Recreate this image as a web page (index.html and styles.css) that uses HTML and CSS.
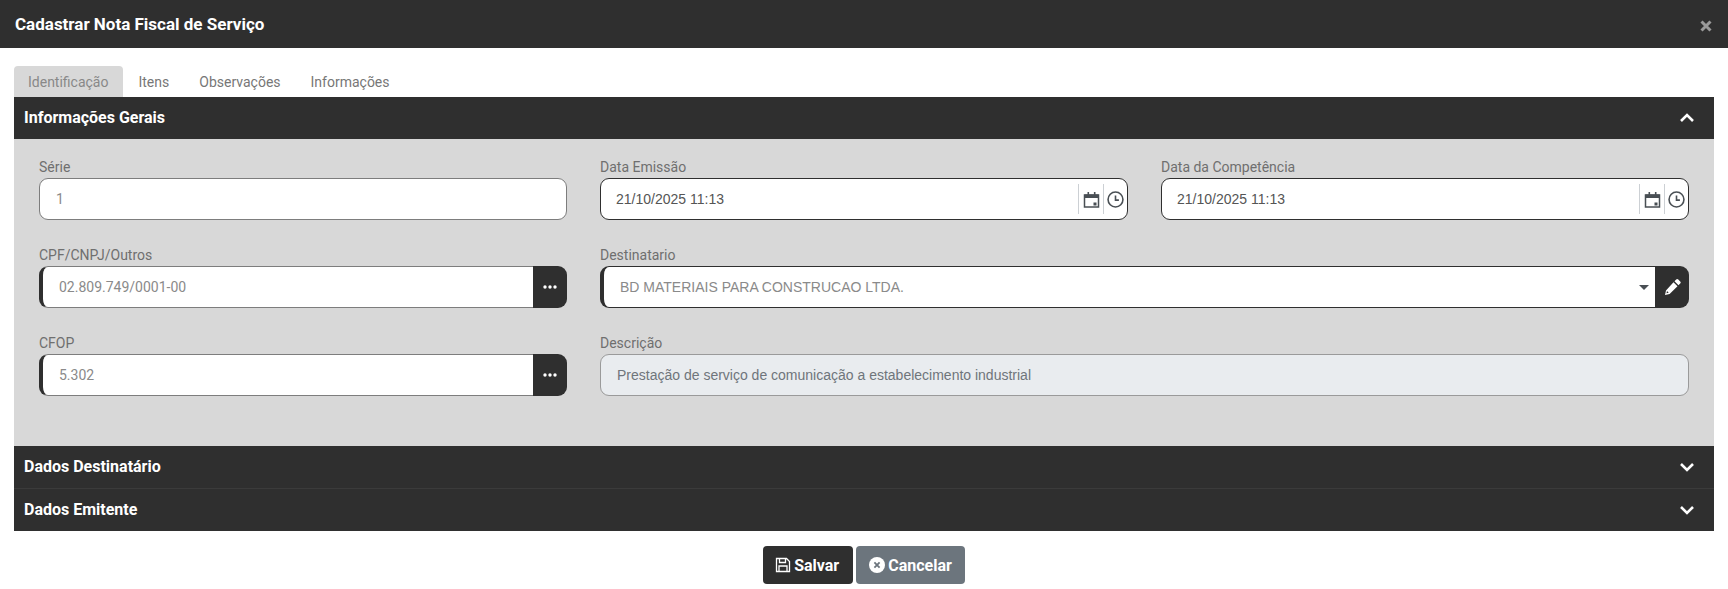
FILE: index.html
```html
<!DOCTYPE html>
<html lang="pt-BR">
<head>
	<meta charset="UTF-8">
	<title>Cadastrar Nota Fiscal de Serviço</title>
	<link rel="stylesheet" href="styles.css">
</head>
<body>
	<div class="modal-head">
		<h1>Cadastrar Nota Fiscal de Serviço</h1>
		<svg class="close" viewBox="0 0 12 12"><path d="M1.500 1.500l9 9M10.500 1.500l-9 9"/></svg>
	</div>
	<div class="content">
		<ul class="tabs">
			<li class="active">Identificação</li>
			<li>Itens</li>
			<li>Observações</li>
			<li>Informações</li>
		</ul>
		<div class="bar">
			<span>Informações Gerais</span>
			<svg class="chev" viewBox="0 0 16 10"><path d="M2 8l6-6 6 6"/></svg>
		</div>
		<div class="panel">
			<div class="field">
				<label>Série</label>
				<div class="input">1</div>
			</div>
			<div class="field">
				<label>Data Emissão</label>
				<div class="input dark date">
					<span class="val">21/10/2025 11:13</span>
					<span class="addon"><svg viewBox="0 0 16 17"><path class="ico" d="M1 4h14v12H1z"/><path class="solid" d="M1 3.500h14V7H1zM4 1h1.600v3H4zM10.400 1H12v3h-1.600zM10 11.500h3v3h-3z"/></svg></span>
					<span class="addon"><svg viewBox="0 0 16 16"><circle class="ico" cx="8" cy="8" r="7"/><path class="ico" d="M8 4.200V8.600h3.200"/></svg></span>
				</div>
			</div>
			<div class="field">
				<label>Data da Competência</label>
				<div class="input dark date">
					<span class="val">21/10/2025 11:13</span>
					<span class="addon"><svg viewBox="0 0 16 17"><path class="ico" d="M1 4h14v12H1z"/><path class="solid" d="M1 3.500h14V7H1zM4 1h1.600v3H4zM10.400 1H12v3h-1.600zM10 11.500h3v3h-3z"/></svg></span>
					<span class="addon"><svg viewBox="0 0 16 16"><circle class="ico" cx="8" cy="8" r="7"/><path class="ico" d="M8 4.200V8.600h3.200"/></svg></span>
				</div>
			</div>
			<div class="field">
				<label>CPF/CNPJ/Outros</label>
				<div class="group">
					<div class="input req">02.809.749/0001-00</div>
					<button class="side"><svg class="dots" viewBox="0 0 14 4"><circle cx="2" cy="2" r="1.700"/><circle cx="7" cy="2" r="1.700"/><circle cx="12" cy="2" r="1.700"/></svg></button>
				</div>
			</div>
			<div class="field wide">
				<label>Destinatario</label>
				<div class="group">
					<div class="input req dark select">
						<span class="val">BD MATERIAIS PARA CONSTRUCAO LTDA.</span>
						<i class="caret"></i>
					</div>
					<button class="side"><svg class="pencil" viewBox="0 0 17 16"><path d="M12.200.6a1.500 1.500 0 0 1 2.100 0l1.900 1.800a1.500 1.500 0 0 1 0 2.100l-1.700 1.700-4-3.900zM9.500 3.300l4 3.900L5.600 15l-4.600 1 1-4.600zM3 12l-.5 2.200 2.200-.5z"/></svg></button>
				</div>
			</div>
			<div class="field">
				<label>CFOP</label>
				<div class="group">
					<div class="input req">5.302</div>
					<button class="side"><svg class="dots" viewBox="0 0 14 4"><circle cx="2" cy="2" r="1.700"/><circle cx="7" cy="2" r="1.700"/><circle cx="12" cy="2" r="1.700"/></svg></button>
				</div>
			</div>
			<div class="field wide">
				<label>Descrição</label>
				<div class="input disabled">Prestação de serviço de comunicação a estabelecimento industrial</div>
			</div>
		</div>
		<div class="bar">
			<span>Dados Destinatário</span>
			<svg class="chev" viewBox="0 0 16 10"><path d="M2 2l6 6 6-6"/></svg>
		</div>
		<div class="bar last">
			<span>Dados Emitente</span>
			<svg class="chev" viewBox="0 0 16 10"><path d="M2 2l6 6 6-6"/></svg>
		</div>
	</div>
	<div class="actions">
		<button class="btn save">
			<svg viewBox="0 0 16 16"><path d="M1.500 1.500h10l3 3v10h-13zM4.500 1.500v4h6v-4M4 14.500v-5.500h8v5.500"/></svg>
			Salvar
		</button>
		<button class="btn cancel">
			<svg viewBox="0 0 16 16"><circle class="disc" cx="8" cy="8" r="8"/><path class="cross" d="M5.400 5.400l5.200 5.200M10.600 5.400l-5.200 5.200"/></svg>
			Cancelar
		</button>
	</div>
</body>
</html>
```
FILE: styles.css
```css
* {
	margin: 0;
	padding: 0;
	box-sizing: border-box;
}
body {
	background: #fff;
	font-family: Roboto, "Liberation Sans", sans-serif;
	font-size: 14px;
	color: #777;
}
.modal-head {
	height: 48px;
	padding: 0 16px 0 15px;
	background: #2f2f2f;
	display: flex;
	align-items: center;
	justify-content: space-between;
}
.modal-head h1 {
	font-size: 17px;
	font-weight: 700;
	color: #fff;
}
.close {
	width: 12px;
	height: 12px;
	margin-top: 4px;
	fill: none;
	stroke: #9a9a9a;
	stroke-width: 3;
}
.content {
	padding: 18px 14px 0;
}
.tabs {
	list-style: none;
	display: flex;
	height: 31px;
}
.tabs li {
	padding: 7px 15px 0;
	line-height: 18px;
	border-radius: 4px 4px 0 0;
	color: #777;
}
.tabs li.active {
	padding: 7px 15px 0 14px;
	background: #d8d8d8;
	color: #888;
}
.bar {
	height: 42px;
	padding: 0 19px 0 10px;
	background: #2f2f2f;
	color: #fff;
	font-size: 16px;
	font-weight: 700;
	display: flex;
	align-items: center;
	justify-content: space-between;
}
.bar span {
	margin-top: -1px;
}
.panel + .bar {
	height: 43px;
	border-bottom: 1px solid #3b3b3b;
}
.chev {
	width: 16px;
	height: 10px;
	fill: none;
	stroke: #fff;
	stroke-width: 2.600;
}
.panel {
	height: 307px;
	padding: 15px 25px 0;
	background: #d8d8d8;
	display: grid;
	grid-template-columns: repeat(3, 1fr);
	grid-auto-rows: 66px;
	gap: 22px 33px;
}
.field.wide {
	grid-column: span 2;
}
.field label {
	display: block;
	height: 24px;
	padding-top: 5px;
	line-height: 16px;
	font-size: 14px;
	color: #6f6f6f;
}
.input {
	height: 42px;
	padding: 0 16px;
	background: #fff;
	border: 1px solid #7d7d7d;
	border-radius: 9px;
	display: flex;
	align-items: center;
	color: #8a8a8a;
	flex: 1;
	min-width: 0;
}
.input.dark {
	border-color: #2f2f2f;
}
.date {
	padding-left: 15px;
	padding-right: 0;
	color: #555;
	font-family: "Liberation Sans", sans-serif;
}
.date .val,
.select .val {
	flex: 1;
}
.addon {
	width: 25px;
	height: 30px;
	border-left: 1px solid #ccd0d4;
	display: flex;
	align-items: center;
	justify-content: center;
}
.addon:last-child {
	width: 24px;
}
.addon svg {
	width: 17px;
	height: 17px;
}
.ico {
	fill: none;
	stroke: #494f54;
	stroke-width: 1.500;
}
.solid {
	fill: #494f54;
}
.group {
	display: flex;
}
.req {
	padding-left: 16px;
	border-left: 4px solid #2f2f2f;
	border-right: 0;
	border-radius: 9px 0 0 9px;
}
.select {
	padding-right: 6px;
	font-family: "Liberation Sans", sans-serif;
}
.caret {
	width: 0;
	height: 0;
	border-left: 5.500px solid transparent;
	border-right: 5.500px solid transparent;
	border-top: 5.500px solid #494f54;
}
.side {
	width: 34px;
	height: 42px;
	background: #2f2f2f;
	border: 0;
	border-radius: 0 9px 9px 0;
	display: flex;
	align-items: center;
	justify-content: center;
}
.dots {
	width: 14px;
	height: 4px;
	fill: #fff;
}
.pencil {
	width: 17px;
	height: 16px;
	fill: #fff;
	fill-rule: evenodd;
}
.disabled {
	padding: 0 16px;
	background: #e9ecef;
	border-color: #9a9a9a;
	color: #6f757b;
	font-family: "Liberation Sans", sans-serif;
}
.actions {
	display: flex;
	justify-content: center;
	gap: 3px;
	padding-top: 15px;
}
.btn {
	height: 38px;
	padding: 0 13px;
	border: 0;
	border-radius: 4px;
	color: #fff;
	font-family: inherit;
	font-size: 16px;
	font-weight: 700;
	display: flex;
	align-items: center;
	gap: 4px;
}
.btn svg {
	width: 16px;
	height: 16px;
}
.save {
	padding: 0 14px 0 12px;
	gap: 3px;
	background: #2f2f2f;
}
.save path {
	fill: none;
	stroke: #fff;
	stroke-width: 1.300;
}
.cancel {
	gap: 3px;
	background: #6c757d;
}
.disc {
	fill: #fff;
}
.cross {
	fill: none;
	stroke: #6c757d;
	stroke-width: 1.800;
}
```
